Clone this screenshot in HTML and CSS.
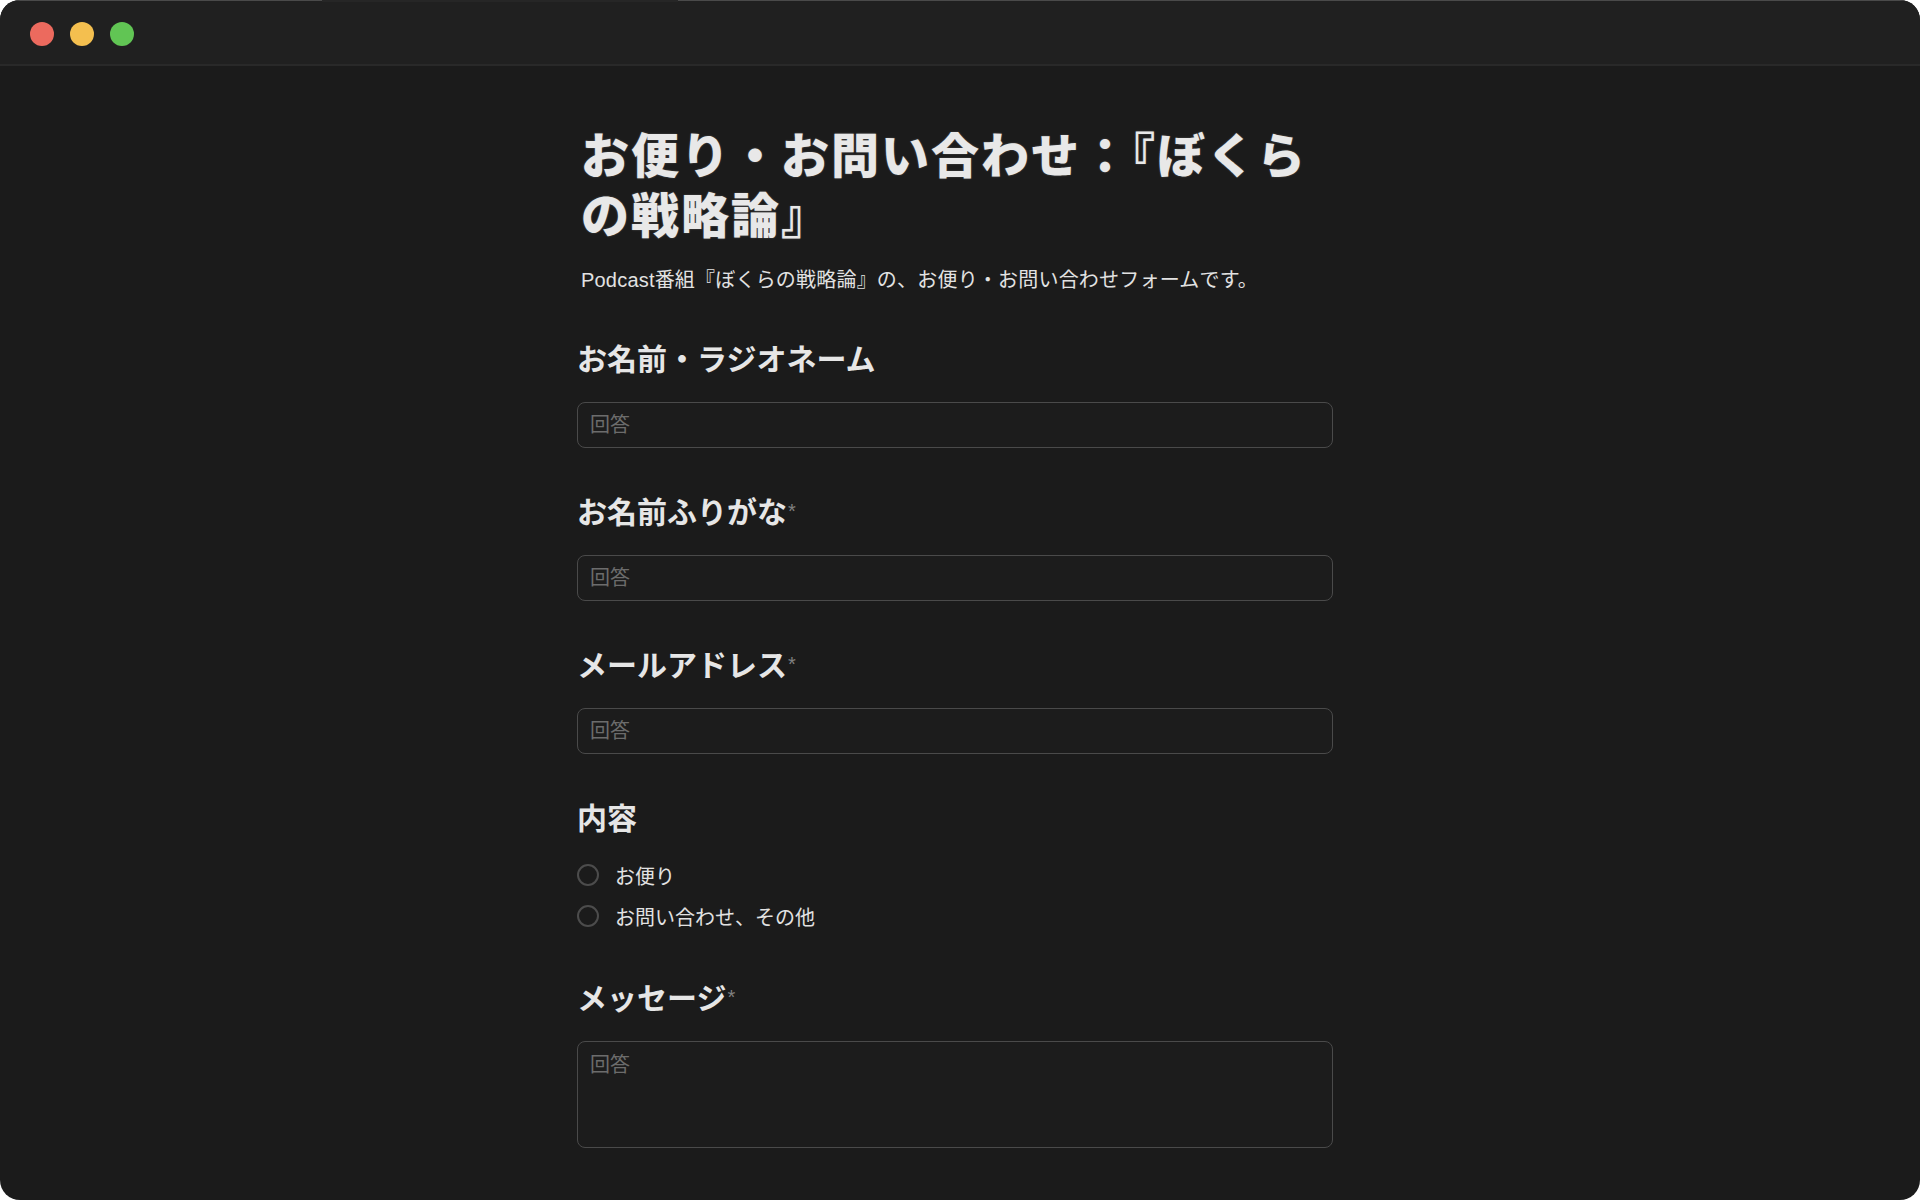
FILE: index.html
```html
<!DOCTYPE html>
<html lang="ja">
<head>
    <meta charset="UTF-8">
    <meta name="viewport" content="width=device-width, initial-scale=1.0">
    <title>お便り・お問い合わせ：『ぼくらの戦略論』</title>
    <link rel="stylesheet" href="styles.css">
</head>
<body>
    <div class="window">
        <div class="titlebar">
            <span class="dot red"></span>
            <span class="dot yellow"></span>
            <span class="dot green"></span>
            <span class="tab-line"></span>
        </div>
        <div class="page">
            <form class="form">
                <h1 class="title">お便り・お問い合わせ：『ぼくらの戦略論』</h1>
                <p class="lead">Podcast番組『ぼくらの戦略論』の、お便り・お問い合わせフォームです。</p>

                <div class="fields">
                    <div class="field">
                        <label class="label">お名前・ラジオネーム</label>
                        <input class="input" type="text" placeholder="回答">
                    </div>
                    <div class="field">
                        <label class="label">お名前ふりがな<span class="req">*</span></label>
                        <input class="input" type="text" placeholder="回答">
                    </div>
                    <div class="field">
                        <label class="label">メールアドレス<span class="req">*</span></label>
                        <input class="input" type="email" placeholder="回答">
                    </div>
                    <div class="field">
                        <label class="label">内容</label>
                        <div class="options">
                            <label class="option"><span class="radio"></span>お便り</label>
                            <label class="option"><span class="radio"></span>お問い合わせ、その他</label>
                        </div>
                    </div>
                    <div class="field">
                        <label class="label">メッセージ<span class="req">*</span></label>
                        <textarea class="input textarea" placeholder="回答"></textarea>
                    </div>
                </div>
            </form>
        </div>
    </div>
</body>
</html>
```

FILE: styles.css
```css
html, body {
    margin: 0;
    height: 100%;
    background: #ffffff;
}
body {
    font-family: 'Liberation Sans', 'Noto Sans CJK JP', sans-serif;
    color: #e4e4e4;
    overflow: hidden;
}
.window {
    height: 1200px;
    border-radius: 20px;
    overflow: hidden;
    background: #1b1b1b;
    display: flex;
    flex-direction: column;
}
.titlebar {
    position: relative;
    height: 66px;
    box-sizing: border-box;
    padding: 22px 0 0 30px;
    display: flex;
    gap: 16px;
    align-items: flex-start;
    background: #202020;
    border-bottom: 2px solid #292929;
    box-shadow: inset 0 1px 0 #4a4a4a;
}
.tab-line {
    position: absolute;
    top: 0;
    left: 322px;
    width: 356px;
    height: 2px;
    background: #262626;
}
.dot {
    width: 24px;
    height: 24px;
    border-radius: 50%;
}
.red { background: #ec6a5e; }
.yellow { background: #f4bf4f; }
.green { background: #61c554; }

.page {
    flex: 1;
    display: flex;
    justify-content: center;
    padding-right: 10px;
}
.form {
    width: 756px;
    padding-top: 56px;
}
.title {
    margin: 0;
    padding-left: 4px;
    font-family: 'Noto Sans CJK JP', sans-serif;
    font-size: 48px;
    line-height: 60px;
    font-weight: 900;
    letter-spacing: 2px;
    color: #e8e8e8;
    text-shadow: 0 0 2px rgba(255, 255, 255, 0.25);
}
.lead {
    margin: 23px 0 0;
    padding-left: 4px;
    font-size: 20px;
    line-height: 30px;
    letter-spacing: 0.2px;
    color: #e2e2e2;
}
.fields {
    margin-top: 45px;
    display: flex;
    flex-direction: column;
    gap: 45px;
}
.field {
    display: flex;
    flex-direction: column;
}
.label {
    font-family: 'Noto Sans CJK JP', sans-serif;
    font-size: 30px;
    line-height: 34px;
    font-weight: 700;
    color: #e6e6e6;
    margin-bottom: 28px;
}
.req {
    font-family: 'Liberation Sans', sans-serif;
    font-size: 20px;
    line-height: 0;
    font-weight: 400;
    color: #808080;
    vertical-align: 5px;
    margin-left: 1px;
}
.input {
    box-sizing: border-box;
    height: 46px;
    width: 100%;
    padding: 0 12px;
    font-family: 'Liberation Sans', 'Noto Sans CJK JP', sans-serif;
    font-size: 20px;
    color: #e4e4e4;
    background: #1c1c1c;
    border: 1.5px solid #4a4a4a;
    border-radius: 8px;
    outline: none;
}
.input::placeholder {
    color: #6c6c6c;
}
.textarea {
    height: 107px;
    padding: 10px 12px;
    line-height: 26px;
    resize: none;
}
.options {
    display: flex;
    flex-direction: column;
    gap: 5px;
    margin-top: -4px;
}
.option {
    height: 36px;
    display: flex;
    align-items: center;
    gap: 16px;
    font-size: 20px;
    color: #e2e2e2;
}
.radio {
    width: 22px;
    height: 22px;
    box-sizing: border-box;
    border: 2px solid #4c4c4c;
    border-radius: 50%;
}
```
